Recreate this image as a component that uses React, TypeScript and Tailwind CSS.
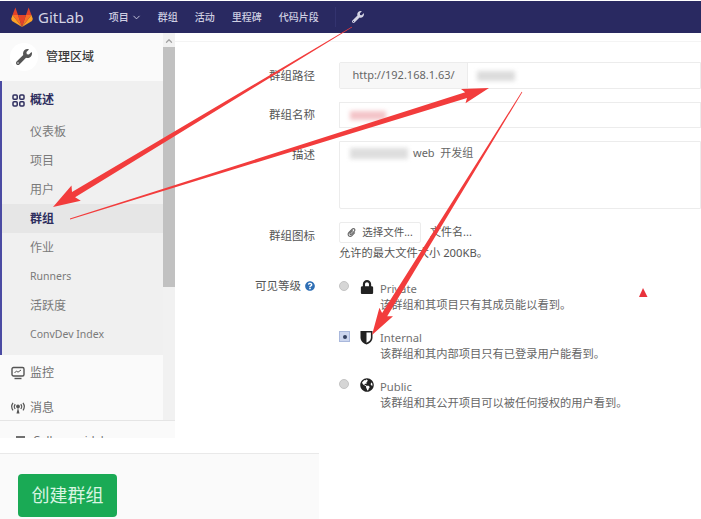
import { FaWrench, FaPaperclip, FaLock, FaGlobeAmericas, FaQuestionCircle } from "react-icons/fa";
import { ChevronDown, ChevronUp } from "lucide-react";

const CJK = "font-['Noto_Sans','Noto_Sans_CJK_SC',sans-serif]";

const subItems = ["仪表板", "项目", "用户", "群组", "作业", "Runners", "活跃度", "ConvDev Index"];
const navItems = ["群组", "活动", "里程碑", "代码片段"];

// tapered annotation arrow: thin tail, thick neck, then the head
function arrowPoints(tx: number, ty: number, x: number, y: number, neck: number, head: number, len: number) {
  const d = Math.hypot(x - tx, y - ty);
  const ux = (x - tx) / d;
  const uy = (y - ty) / d;
  const nx = -uy;
  const ny = ux;
  const bx = x - ux * len;
  const by = y - uy * len;
  const p = [
    [tx + nx * 0.4, ty + ny * 0.4],
    [bx + nx * neck, by + ny * neck],
    [bx - ux * 3 + nx * head, by - uy * 3 + ny * head],
    [x, y],
    [bx - ux * 3 - nx * head, by - uy * 3 - ny * head],
    [bx - nx * neck, by - ny * neck],
    [tx - nx * 0.4, ty - ny * 0.4],
  ];
  return p.map((q) => q.map((v) => v.toFixed(1)).join(",")).join(" ");
}

function GitlabLogo() {
  return (
    <svg width="22" height="20" viewBox="0 0 22 20">
      <polygon points="11,20 15,8 7,8" fill="#e24329" />
      <polygon points="11,20 7,8 1.5,8" fill="#fc6d26" />
      <polygon points="1.5,8 0.2,12 1,14 11,20" fill="#fca326" />
      <polygon points="1.5,8 7,8 4.4,0.5" fill="#e24329" />
      <polygon points="11,20 15,8 20.5,8" fill="#fc6d26" />
      <polygon points="20.5,8 21.8,12 21,14 11,20" fill="#fca326" />
      <polygon points="20.5,8 15,8 17.6,0.5" fill="#e24329" />
    </svg>
  );
}

function OverviewIcon() {
  return (
    <svg width="13" height="13" viewBox="0 0 13 13" fill="none" stroke="#2e2e5e" strokeWidth="1.5">
      <rect x="1" y="1" width="4.2" height="4.2" rx="1" />
      <rect x="7.8" y="1" width="4.2" height="4.2" rx="1" />
      <rect x="1" y="7.8" width="4.2" height="4.2" rx="1" />
      <rect x="7.8" y="7.8" width="4.2" height="4.2" rx="1" />
    </svg>
  );
}

function MonitorIcon() {
  return (
    <svg width="14" height="14" viewBox="0 0 14 14" fill="none" stroke="#555" strokeWidth="1.4">
      <rect x="1" y="1.5" width="12" height="8.5" rx="1.5" />
      <path d="M3.5 7l2-2 1.5 1.2L10 4" strokeWidth="1" />
      <path d="M3.5 12.5h7" />
    </svg>
  );
}

function SignalIcon() {
  return (
    <svg width="14" height="14" viewBox="0 0 14 14" fill="none" stroke="#555" strokeWidth="1.2">
      <circle cx="7" cy="5.5" r="1.3" fill="#555" />
      <path d="M7 6.5L5.5 12.5h3z" fill="#555" stroke="none" />
      <path d="M4.2 3.2a4 4 0 0 0 0 4.8M9.8 3.2a4 4 0 0 1 0 4.8" />
      <path d="M2 1.8a6.5 6.5 0 0 0 0 7.5M12 1.8a6.5 6.5 0 0 1 0 7.5" />
    </svg>
  );
}

// half shield: dark left side, white right side, dark outline
function ShieldIcon() {
  return (
    <svg className="mt-px" width="13" height="15" viewBox="0 0 13 15">
      <path d="M0.5 1h12v6.5c0 3.6-2.8 5.8-6 7-3.2-1.2-6-3.4-6-7z" fill="#222" />
      <path d="M6.5 2.6h4.4v4.9c0 2.6-1.9 4.2-4.4 5.3z" fill="#fff" />
    </svg>
  );
}

function Sidebar() {
  return (
    <aside className="w-[175px] h-[405px] shrink-0 flex flex-col overflow-hidden bg-[#f3f3f3]">
      <div className="flex flex-1 min-h-0">
        <div className="w-[163px] flex flex-col bg-[#fafafa] overflow-hidden">
          <div className="h-[48px] shrink-0 flex items-center pl-[10px] gap-[8px]">
            <div className="w-[28px] h-[28px] rounded-full bg-white flex items-center justify-center">
              <FaWrench className="text-[#555] text-[16px]" />
            </div>
            <span className="text-[12px] font-medium text-[#3a3a3a]">管理区域</span>
          </div>
          <div className="h-[274px] shrink-0 border-l-[2px] border-[#4b4ba3] bg-[#f0f0f0] flex flex-col">
            <div className="h-[36px] shrink-0 pt-[2px] flex items-center pl-[10px] gap-[5px]">
              <OverviewIcon />
              <span className="text-[12px] font-bold text-[#2e2e5e]">概述</span>
            </div>
            <div>
              {subItems.map((s) => (
                <div
                  key={s}
                  className={`h-[29px] flex items-center pl-[28px] ${
                    s === "群组" ? "bg-[#e6e6e6] font-bold text-[#2e2e5e]" : "text-[#7a7a7a]"
                  } ${s === "Runners" || s === "ConvDev Index" ? "text-[10.5px]" : "text-[12px]"}`}
                >
                  {s}
                </div>
              ))}
            </div>
          </div>
          <div className="flex-1 min-h-0 flex flex-col pl-[11px] text-[12px] text-[#707070]">
            <div className="h-[36px] shrink-0 flex items-center gap-[5px]">
              <MonitorIcon />
              <span>监控</span>
            </div>
            <div className="h-[29px] shrink-0 flex items-center gap-[5px] pt-[5px]">
              <SignalIcon />
              <span>消息</span>
            </div>
          </div>
        </div>
        <div className="w-[12px] flex flex-col items-center bg-[#f1f1f1]">
          <ChevronUp className="w-[10px] h-[12px] text-[#a3a3a3] mt-[2px]" strokeWidth={3} />
          <div className="w-full h-[240px] bg-[#c1c1c1]" />
        </div>
      </div>
      <div className="h-[18px] shrink-0 border-t border-[#e5e5e5] bg-[#fafafa] overflow-hidden pl-[16px] pt-[12px] flex items-start gap-[8px] text-[11px] text-[#707070] leading-[14px]">
        <span className="w-[9px] h-[10px] mt-[3px] bg-[#707070] shrink-0" />
        <span>Collapse sidebar</span>
      </div>
    </aside>
  );
}

function Row({ label, children }: { label: React.ReactNode; children: React.ReactNode }) {
  return (
    <div className="flex">
      <div className="w-[140px] shrink-0 text-right text-[11.5px] leading-[18px] text-[#555]">{label}</div>
      <div className="ml-[24px] flex-1 min-w-0">{children}</div>
    </div>
  );
}

function VisibilityOption({
  name, desc, icon, checked,
}: {
  name: string; desc: string; icon: React.ReactNode; checked?: boolean;
}) {
  return (
    <div className="flex h-[49px]">
      <div className="w-[11px] shrink-0 mt-[1px] flex">
        {checked ? (
          <span className="w-[11px] h-[11px] mt-[2px] bg-[#ccd6ee] border border-[#a9b8dc] flex items-center justify-center">
            <span className="w-[4px] h-[4px] bg-[#33405f] rounded-full" />
          </span>
        ) : (
          <span className="w-[10px] h-[10px] mt-[1px] rounded-full bg-[#d6d6d6] border border-[#c4c4c4]" />
        )}
      </div>
      <div className="w-[14px] ml-[10px] shrink-0 text-[#222] text-[14px] pt-[1px]">{icon}</div>
      <div className="ml-[6px] text-[11.25px] leading-[16px] text-[#707070] pt-[2px]">
        <div>{name}</div>
        <div className="text-[#666]">{desc}</div>
      </div>
    </div>
  );
}

function GroupForm() {
  return (
    <main className="flex-1 min-w-0 mt-[8px] border-t border-[#f4f4f4] pt-[20px] overflow-hidden">
      <div className="flex flex-col">
        <Row label={<div className="pt-[5px]">群组路径</div>}>
          <div className="flex h-[27px] border border-[#ececec] rounded-l-[2px]">
            <div className="w-[128px] bg-[#f7f7f7] border-r border-[#ececec] flex items-center justify-center text-[11px] text-[#666]">
              http://192.168.1.63/
            </div>
            <div className="pl-[9px] flex items-center">
              <span className="w-[38px] h-[10px] bg-[#dcdcdc] blur-[2px]" />
            </div>
          </div>
        </Row>
        <div className="mt-[13px]">
          <Row label={<div className="pt-[4px]">群组名称</div>}>
            <div className="h-[26px] border border-[#ececec] pl-[10px] flex items-center">
              <span className="w-[36px] h-[9px] bg-[#f3c4c8] blur-[2px]" />
            </div>
          </Row>
        </div>
        <div className="mt-[13px]">
          <Row label={<div className="pt-[5px]">描述</div>}>
            <div className="h-[68px] border border-[#ececec] pl-[10px] pt-[3px] flex items-start gap-[5px] text-[11px] text-[#666] leading-[16px] rounded-bl-[2px]">
              <span className="w-[58px] h-[11px] mt-[3px] bg-[#dedede] blur-[2px]" />
              <span>web&nbsp; 开发组</span>
            </div>
          </Row>
        </div>
        <div className="mt-[13px]">
          <Row label={<div className="pt-[5px]">群组图标</div>}>
            <div className="flex items-center">
              <div className="w-[82px] h-[21px] border border-[#ececec] rounded-[2px] flex items-center justify-center gap-[6px] text-[10.5px] text-[#555]">
                <FaPaperclip className="text-[9px] text-[#666]" />
                <span>选择文件...</span>
              </div>
              <span className="ml-[9px] text-[11px] text-[#555]">文件名...</span>
            </div>
            <div className="text-[11.25px] leading-[16px] text-[#555] mt-[2px]">允许的最大文件大小 200KB。</div>
          </Row>
        </div>
        <div className="mt-[18px]">
          <Row
            label={
              <span className="flex justify-end items-center gap-[4px] -mt-[2px]">
                可见等级
                <FaQuestionCircle className="text-[10px] text-[#2f6fb5]" />
              </span>
            }
          >
            <VisibilityOption name="Private" desc="该群组和其项目只有其成员能以看到。" icon={<FaLock />} />
            <VisibilityOption name="Internal" desc="该群组和其内部项目只有已登录用户能看到。" icon={<ShieldIcon />} checked />
            <VisibilityOption name="Public" desc="该群组和其公开项目可以被任何授权的用户看到。" icon={<FaGlobeAmericas />} />
          </Row>
        </div>
      </div>
    </main>
  );
}

export default function App() {
  return (
    <div className={`relative w-[701px] h-[519px] overflow-hidden bg-white ${CJK}`}>
      <header className="h-[32px] mt-px bg-[#292961] flex items-center text-[10px] font-medium text-[#cfcfe2]">
        <div className="ml-[11px]">
          <GitlabLogo />
        </div>
        <span className="ml-[5px] text-[15px] font-normal text-[#d4d4e4]">GitLab</span>
        <div className="ml-[25px] flex items-center gap-[2px] w-[49px]">
          项目
          <ChevronDown className="w-[11px] h-[11px]" />
        </div>
        {navItems.map((n, i) => (
          <span key={n} className={i === 0 ? "" : "ml-[17px]"}>{n}</span>
        ))}
        <div className="ml-[16px] h-[20px] border-l border-[#33336f] pl-[16px] flex items-center">
          <FaWrench className="text-[12px] text-[#d4d4e4]" />
        </div>
      </header>

      <div className="flex">
        <Sidebar />
        <GroupForm />
      </div>

      <footer className="mt-[15px] w-[319px] h-[66px] bg-[#fafafa] border-t border-[#e9e9e9] pl-[18px] pt-[20px]">
        <button className="w-[99px] h-[43px] rounded-[4px] bg-[#1aaa55] text-[18px] text-[#d9f5e2]">创建群组</button>
      </footer>

      {/* red annotation arrows drawn on top of the page */}
      <svg className="absolute inset-0 pointer-events-none" width="701" height="519">
        <polygon points={arrowPoints(352, 27, 53, 207, 3, 9, 24)} fill="#f23c3c" />
        <polygon points={arrowPoints(70, 219, 489, 88, 3, 7.5, 24)} fill="#f23c3c" />
        <polygon points={arrowPoints(522, 92, 372, 335, 3, 8, 24)} fill="#f23c3c" />
        <polygon points="643,288 647.5,297 639,297" fill="#e8323c" />
      </svg>
    </div>
  );
}
